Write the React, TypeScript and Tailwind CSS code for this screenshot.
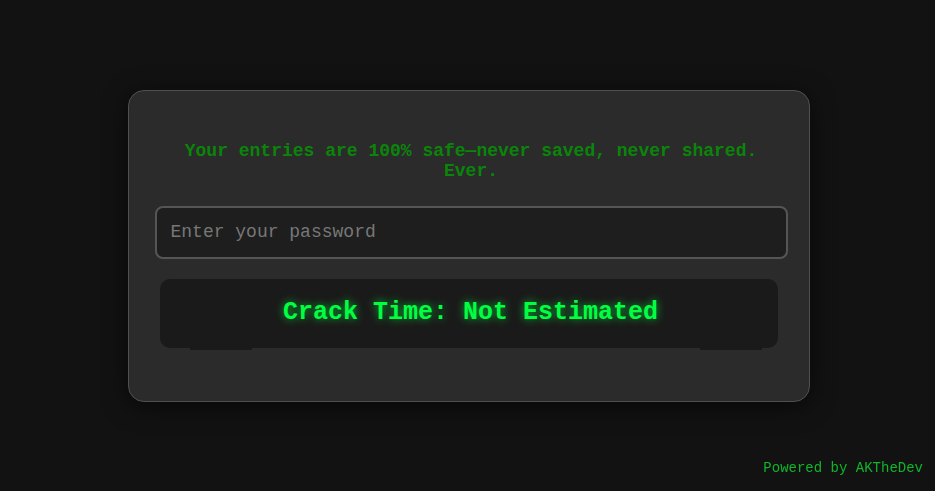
import React from "react";

const mono = "font-['Liberation_Mono','Courier_New',monospace]";

function App() {
  return (
    <div className={`min-h-screen w-full bg-[#121212] flex items-center justify-center ${mono}`}>
      <div className="ml-[2px] w-[682px] h-[312px] rounded-[16px] border border-[#505050] bg-[#2b2b2b] shadow-[0_4px_24px_rgba(0,0,0,0.6)] pt-[50px] pl-[26px] pr-[21px]">
        <p className="text-center text-[18px] leading-[20px] font-bold text-[#0a850a]">
          Your entries are 100% safe—never saved, never shared. Ever.
        </p>
        <input
          type="password"
          placeholder="Enter your password"
          className="mt-[25px] block w-[633px] h-[53px] rounded-[8px] border-2 border-[#555] bg-[#1e1e1e] px-[14px] text-[18px] text-[#ddd] placeholder:text-[#777] outline-none"
        />
        <div className="ml-[5px] mt-[20px] w-[618px]">
          <div className="h-[69px] rounded-[10px] bg-[#1a1a1a] flex items-center justify-center">
            <span className="ml-[4px] text-[25px] font-bold text-[#00ff41] [text-shadow:0_0_8px_rgba(0,255,65,0.7)]">
              Crack Time: Not Estimated
            </span>
          </div>
          <div className="flex justify-between pl-[30px] pr-[16px]">
            <div className="w-[62px] h-[2px] bg-[#1a1a1a]" />
            <div className="w-[62px] h-[2px] bg-[#1a1a1a]" />
          </div>
        </div>
      </div>
      <div className="fixed bottom-[12px] right-[12px] text-[14px] text-[#0fb52a]">
        Powered by AKTheDev
      </div>
    </div>
  );
}

export default App;
